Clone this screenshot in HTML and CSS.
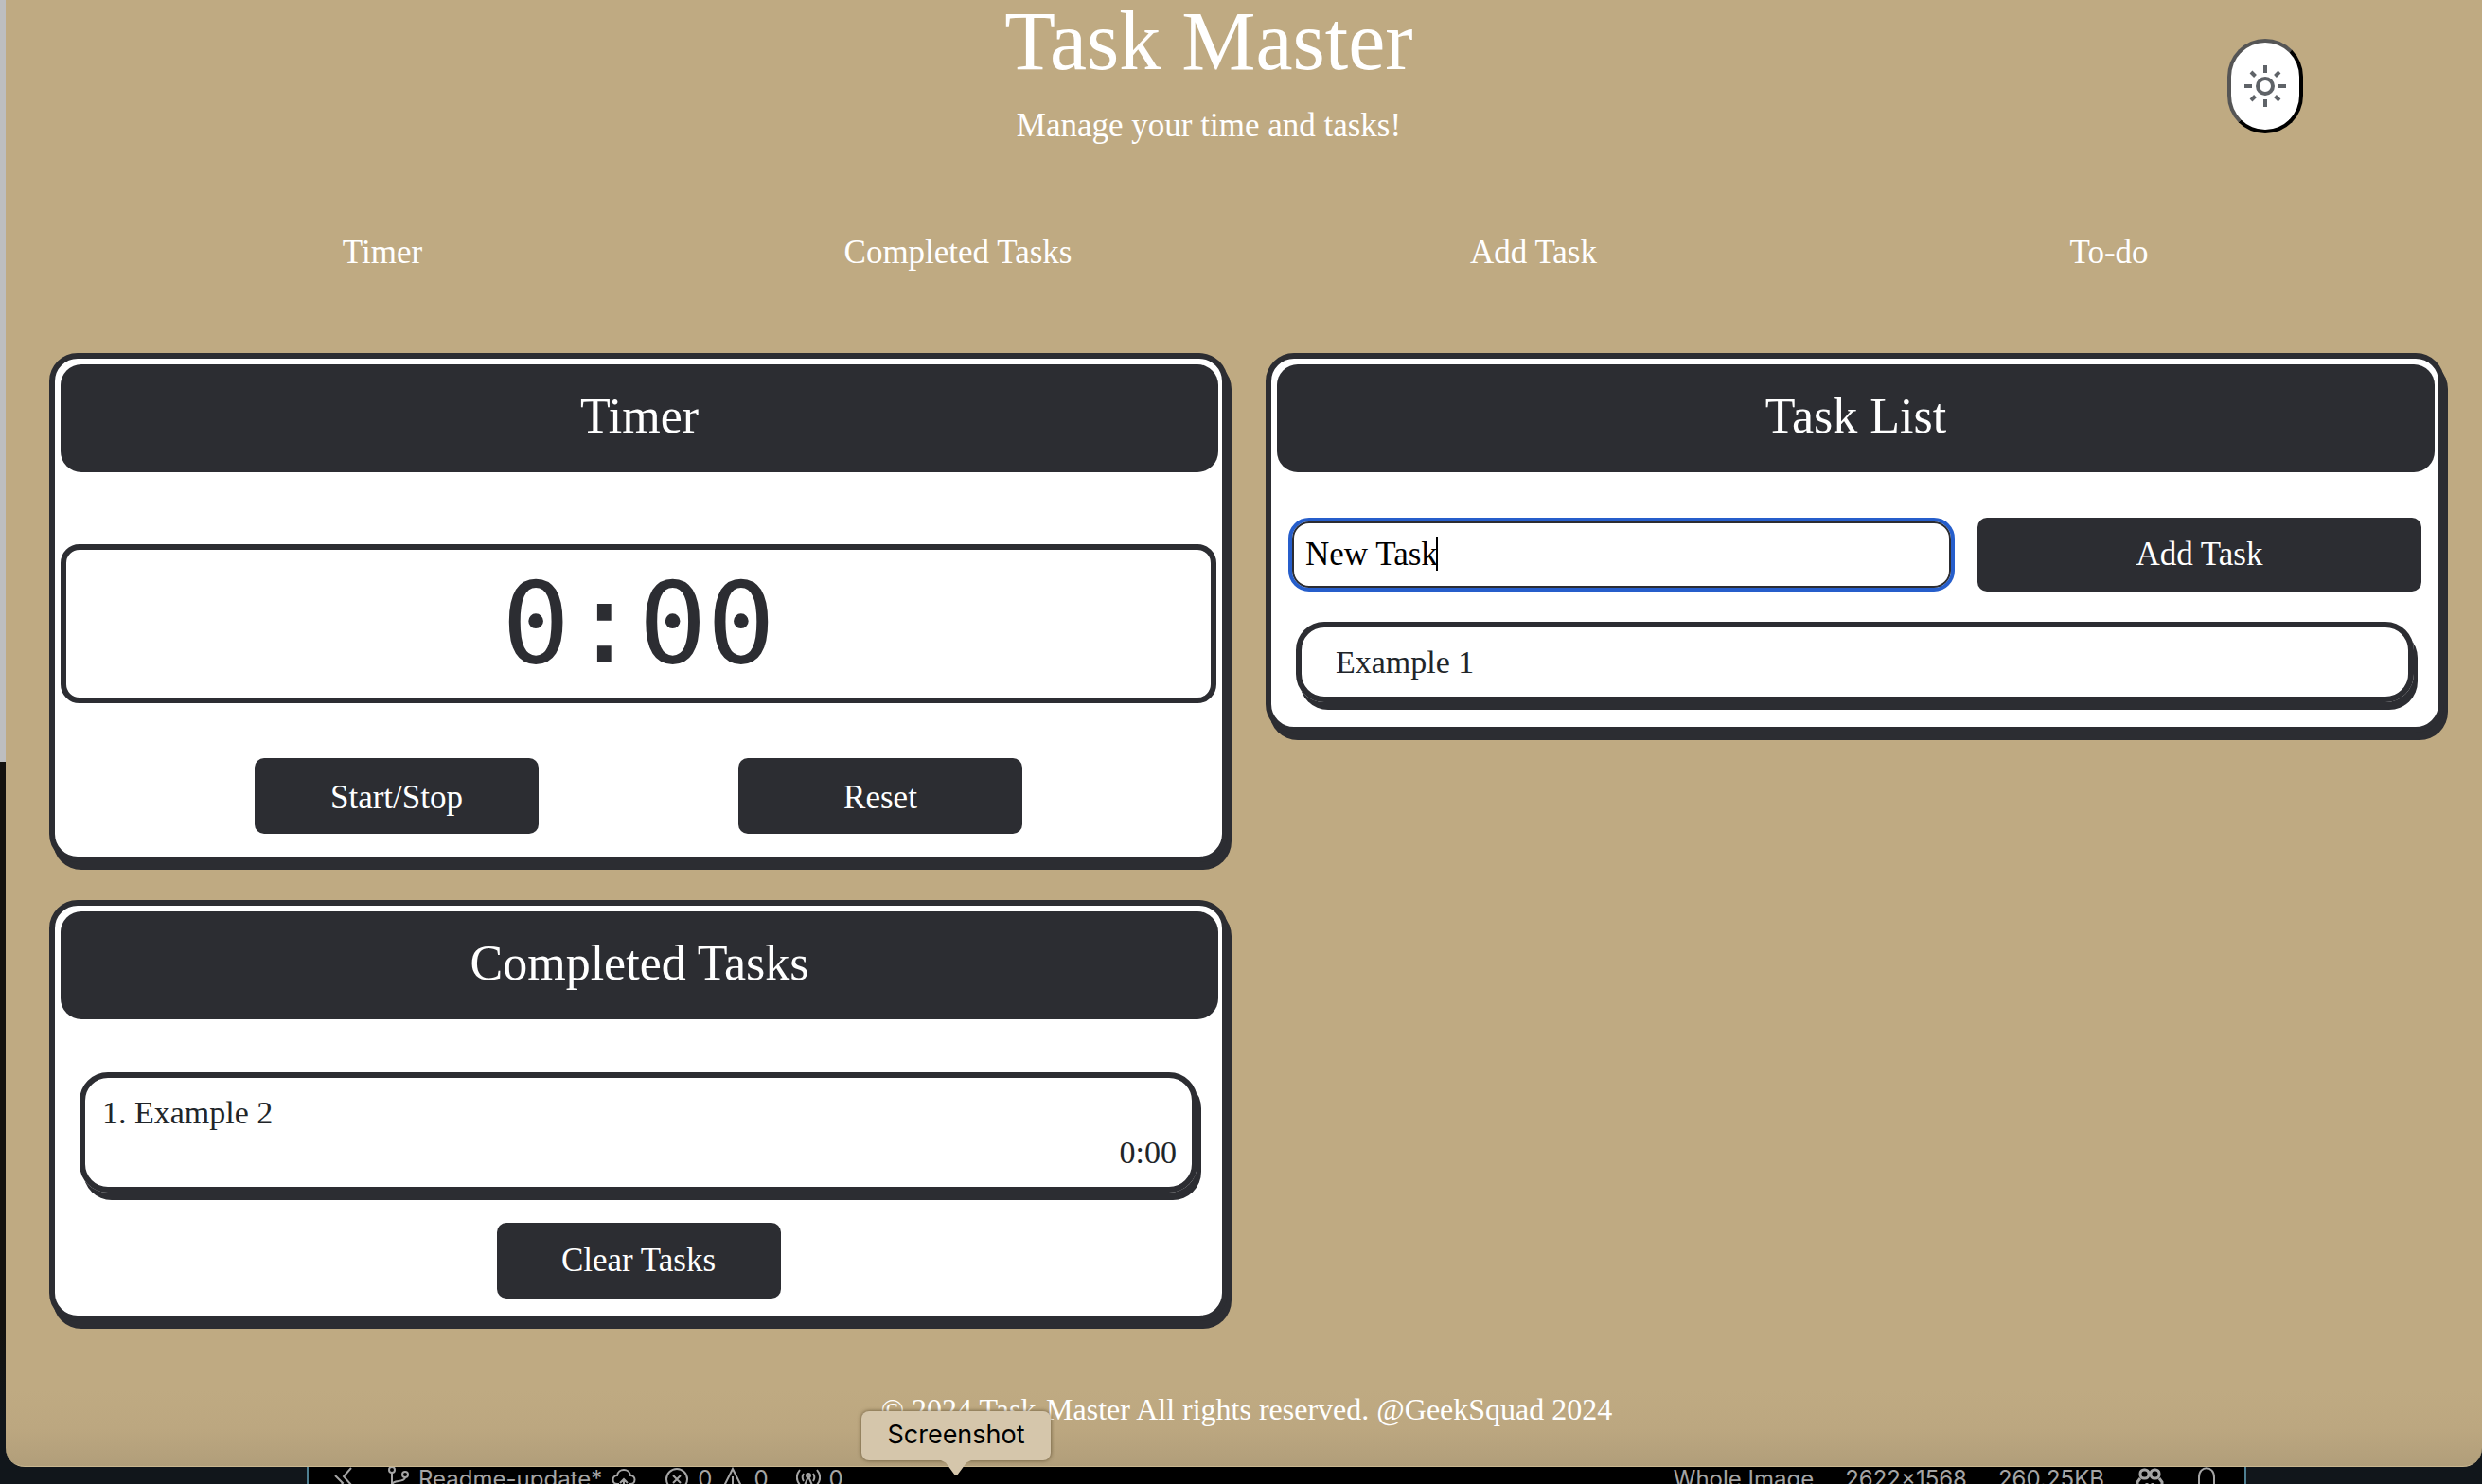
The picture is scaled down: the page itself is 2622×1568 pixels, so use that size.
FILE: index.html
```html
<!DOCTYPE html>
<html lang="en">
<head>
<meta charset="utf-8">
<title>Task Master</title>
<link rel="stylesheet" href="styles.css">
</head>
<body>
<div class="page">
  <header class="masthead">
    <div class="masthead-text">
      <h1>Task Master</h1>
      <p>Manage your time and tasks!</p>
    </div>
    <button class="theme-toggle" type="button" aria-label="Toggle theme">
      <svg width="48" height="48" viewBox="-24 -24 48 48" fill="none" stroke="#5f6368" stroke-width="4">
        <circle r="8"/>
        <path d="M0-22v8M0 14v8M-22 0h8M14 0h8M-15-15l4.500 4.500M15-15l-4.500 4.500M-15 15l4.500-4.500M15 15l-4.500-4.500"/>
      </svg>
    </button>
  </header>

  <nav class="menu">
    <a href="#timer">Timer</a>
    <a href="#completed">Completed Tasks</a>
    <a href="#new-task">Add Task</a>
    <a href="#todo">To-do</a>
  </nav>

  <main class="board">
    <div class="column">
      <section class="card" id="timer">
        <h2>Timer</h2>
        <div class="display">0:00</div>
        <div class="timer-actions">
          <button class="btn" type="button">Start/Stop</button>
          <button class="btn" type="button">Reset</button>
        </div>
      </section>
      <section class="card card-completed" id="completed">
        <h2>Completed Tasks</h2>
        <div class="item item-done">
          <span>1. Example 2</span>
          <span class="item-time">0:00</span>
        </div>
        <button class="btn" type="button">Clear Tasks</button>
      </section>
    </div>
    <section class="card card-list" id="todo">
      <h2>Task List</h2>
      <form class="new-task">
        <div class="field">
          <input id="new-task" type="text" value="New Task" aria-label="New task">
          <span class="caret"></span>
        </div>
        <button class="btn" type="button">Add Task</button>
      </form>
      <div class="item">Example 1</div>
    </section>
  </main>

  <footer class="footer">© 2024 Task-Master All rights reserved. @GeekSquad 2024</footer>
</div>

<div class="statusbar">
  <div class="status-group">
    <svg class="remote" width="24" height="26" viewBox="0 0 24 26"><path d="M2 9l8 8-6 9M19 1l-8 9 8 9"/></svg>
    <svg class="branch" width="24" height="26" viewBox="0 0 24 26"><circle cx="5" cy="3" r="3"/><circle cx="19" cy="8" r="3"/><circle cx="5" cy="23" r="3"/><path d="M5 6v14M19 11c0 6-14 2-14 8"/></svg>
    <span class="branch-name">Readme-update*</span>
    <svg class="cloud" width="28" height="26" viewBox="0 0 28 26"><path d="M9 18H7C1 18 1 9 7 9c1-8 13-8 14 0 6 0 6 9 0 9h-2M14 25V13M10 17l4-4 4 4"/></svg>
    <svg width="26" height="26" viewBox="0 0 26 26"><circle cx="13" cy="13" r="11"/><path d="M9 9l8 8M17 9l-8 8"/></svg>
    <span>0</span>
    <svg width="26" height="26" viewBox="0 0 26 26"><path d="M13 2L2 24h22zM13 10v8M13 20v2"/></svg>
    <span class="warnings">0</span>
    <svg width="26" height="26" viewBox="0 0 26 26"><path d="M7 24l6-14 6 14M9 19h8M8 15c-2-3-2-5 0-8M18 15c2-3 2-5 0-8M4 19c-4-5-4-11 0-16M22 19c4-5 4-11 0-16"/><circle cx="13" cy="9" r="2"/></svg>
    <span>0</span>
  </div>
  <div class="status-group status-right">
    <span>Whole Image</span>
    <span>2622x1568</span>
    <span>260.25KB</span>
    <svg width="30" height="26" viewBox="0 0 30 26" class="thick"><rect x="5" y="3" width="9" height="9" rx="4"/><rect x="16" y="3" width="9" height="9" rx="4"/><path d="M5 12l-3 4v8M25 12l3 4v8M12 17v5M18 17v5"/></svg>
    <svg width="24" height="26" viewBox="0 0 24 26"><path d="M4 20V11c0-13 16-13 16 0v9l2 4H2z"/></svg>
  </div>
</div>
<div class="tooltip" role="tooltip">Screenshot</div>
</body>
</html>
```
FILE: styles.css
```css
:root {
  --sand: #bfaa82;
  --ink: #2c2d32;
}

* {
  box-sizing: border-box;
}

body {
  margin: 0;
  min-height: 100vh;
  padding-left: 6px;
  display: flex;
  flex-direction: column;
  position: relative;
  overflow: hidden;
  background: linear-gradient(#bdbec0 0 805px, #14120f 805px 1400px, #11161b 1500px);
  font-family: "Liberation Serif", serif;
  font-size: 35px;
  line-height: 42px;
  color: #212529;
}

h1, h2, p {
  margin: 0;
  font-weight: 400;
}

.page {
  flex: 1;
  background: linear-gradient(to top, #b19e7a 0, #bca780 40px, var(--sand) 80px);
  border-bottom: 1px solid #c9b68f;
  border-radius: 0 0 20px 20px;
}

.masthead {
  display: flex;
  align-items: flex-start;
  padding: 0 189px 0 195px;
  color: #fff;
}

.masthead-text {
  flex: 1;
  text-align: center;
}

.masthead h1 {
  font-size: 88px;
  line-height: 88px;
  margin-bottom: 24px;
}

.theme-toggle {
  width: 80px;
  height: 100px;
  margin-top: 41px;
  padding: 0;
  display: flex;
  align-items: center;
  justify-content: center;
  border: 4px solid;
  border-color: #555 #000 #000 #555;
  border-radius: 40px;
  background: #fff;
}

.menu {
  display: grid;
  grid-template-columns: repeat(4, 1fr);
  margin: 92px 90px 85px 94px;
  text-align: center;
}

.menu a {
  color: #fff;
  text-decoration: none;
}

.board {
  display: grid;
  grid-template-columns: 1fr 1fr;
  gap: 40px;
  align-items: start;
  padding: 0 40px 0 46px;
}

.column {
  display: grid;
  gap: 40px;
}

.card {
  padding: 6px;
  background: #fff;
  border: 6px solid var(--ink);
  border-radius: 30px;
  box-shadow: 4px 8px 0 var(--ink);
}

.card h2 {
  margin-right: -2px;
  padding: 26px 0 30px;
  background: var(--ink);
  border-radius: 22px;
  color: #fff;
  font-size: 52px;
  line-height: 58px;
  text-align: center;
}

.display {
  margin: 76px 0 58px;
  border: 6px solid var(--ink);
  border-radius: 20px;
  color: var(--ink);
  font-family: Menlo, "DejaVu Sans Mono", monospace;
  font-size: 120px;
  line-height: 156px;
  text-align: center;
}

.btn {
  width: 300px;
  height: 80px;
  padding: 0;
  border: 0;
  border-radius: 10px;
  background: var(--ink);
  color: #fff;
  font: inherit;
}

.timer-actions {
  display: flex;
  justify-content: center;
  gap: 211px;
  padding-bottom: 18px;
}

.timer-actions .btn {
  padding-top: 3px;
}

.item {
  margin: 32px 20px 20px;
  padding: 16px 36px 15px;
  border: 6px solid var(--ink);
  border-radius: 30px;
  box-shadow: 4px 8px 0 var(--ink);
  font-size: 34px;
}

.item-done {
  display: flex;
  flex-direction: column;
  margin: 56px 20px 32px;
  padding: 16px 16px 15px 18px;
}

.item-time {
  align-self: flex-end;
}

.card-completed .btn {
  display: block;
  margin: 0 auto 12px;
}

.new-task {
  display: grid;
  grid-template-columns: 3fr 2fr;
  gap: 24px;
  margin: 48px 12px 0;
}

.field {
  position: relative;
  display: flex;
  padding: 4px;
}

.field input {
  flex: 1;
  min-width: 0;
  height: 70px;
  padding: 0 12px;
  border: 2px solid var(--ink);
  border-radius: 18px;
  outline: 4px solid #265ecb;
  background: #fff;
  color: #000;
  font: inherit;
}

.caret {
  position: absolute;
  left: 156px;
  top: 20px;
  width: 2px;
  height: 36px;
  background: #000;
}

.new-task .btn {
  width: 100%;
  height: 78px;
}

.footer {
  margin: 72px 40px 39px 46px;
  color: #fff;
  font-size: 32px;
  text-align: center;
}

/* Editor status bar peeking out below the page */
.statusbar {
  height: 19px;
  margin: 0 249px 0 318px;
  padding: 0 28px 0 26px;
  display: flex;
  justify-content: space-between;
  align-items: flex-start;
  overflow: hidden;
  border: solid #4e7f92;
  border-width: 0 2px;
  background: #000;
  color: #a5a5a5;
  font-family: Inter, sans-serif;
  font-size: 24px;
  line-height: 26px;
}

.status-group {
  display: flex;
  gap: 9px;
}

.status-right {
  gap: 33px;
}

.statusbar svg {
  flex: none;
  fill: none;
  stroke: #a5a5a5;
  stroke-width: 2;
}

.statusbar .thick {
  stroke-width: 3;
}

.remote {
  margin-right: 24px;
}

.cloud {
  margin-right: 20px;
}

.warnings {
  margin-right: 20px;
}

.tooltip {
  position: absolute;
  left: 910px;
  bottom: 26px;
  width: 200px;
  height: 52px;
  border-radius: 8px;
  background: #d5c6ab;
  box-shadow: 0 0 4px rgba(60, 45, 20, 0.7);
  color: #000;
  font-family: Inter, sans-serif;
  font-size: 27px;
  line-height: 50px;
  text-align: center;
}

.tooltip::after {
  content: "";
  position: absolute;
  left: 84px;
  top: 52px;
  width: 32px;
  height: 16px;
  background: #d5c6ab;
  clip-path: polygon(0 0, 100% 0, 84% 16%, 56% 92%, 50% 100%, 44% 92%, 16% 16%);
}
```
